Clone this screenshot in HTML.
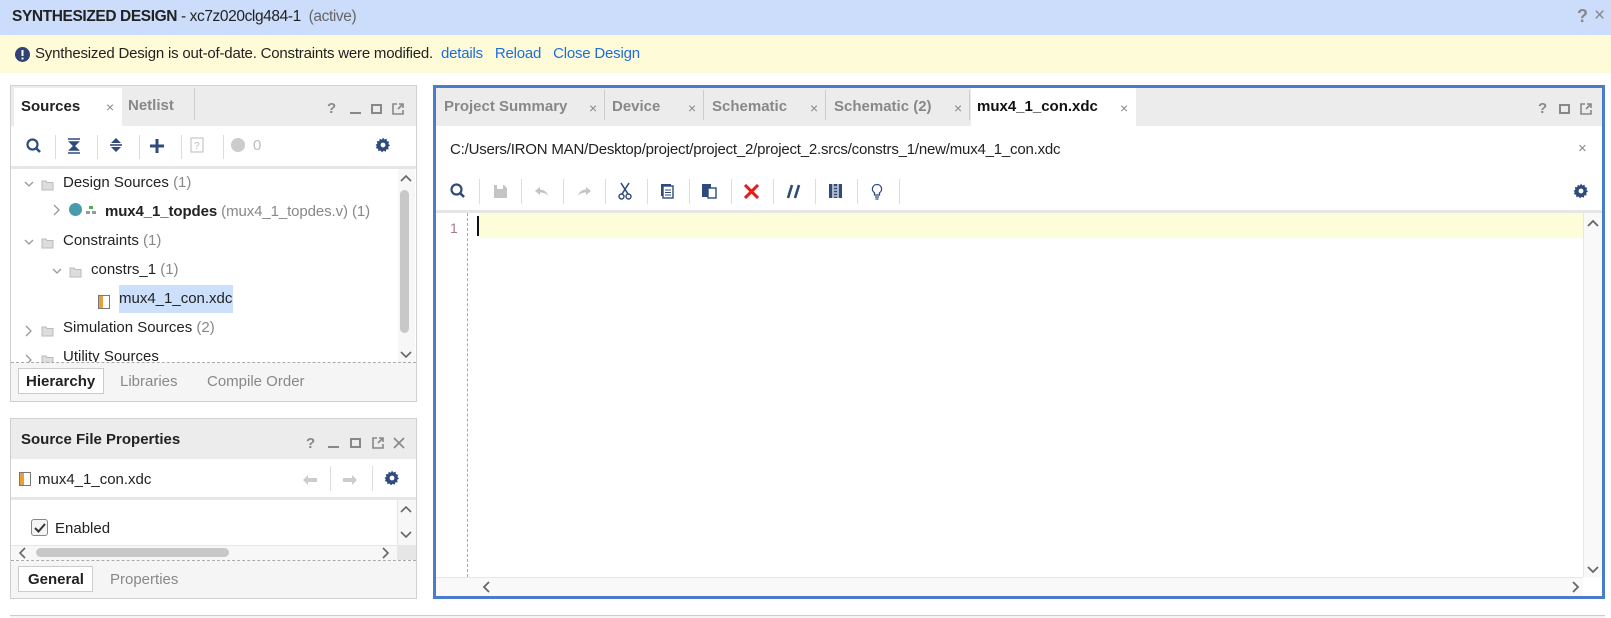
<!DOCTYPE html>
<html><head><meta charset="utf-8"><style>
*{box-sizing:border-box;margin:0;padding:0}
body{width:1611px;height:618px;overflow:hidden;background:#fff;font-family:"Liberation Sans",Arial,sans-serif;font-size:15px;color:#222;position:relative}
.a{position:absolute;white-space:nowrap}
.g{color:#888}
.ic{position:absolute}
.sep{position:absolute;width:1px;background:#ddd}
</style></head><body>
<!-- header -->
<div class="a" style="left:0;top:0;width:1611px;height:35px;background:#cbddfb"></div>
<div class="a" style="left:12px;top:8px;font-size:15.5px;letter-spacing:-0.4px"><b>SYNTHESIZED DESIGN</b> - xc7z020clg484-1 &nbsp;<span style="color:#666">(active)</span></div>
<div class="a" style="left:1577px;top:6px;font-size:18px;font-weight:bold;color:#888">?</div>
<div class="a" style="left:1594px;top:5px;font-size:19px;color:#888">×</div>
<div class="a" style="left:0;top:35px;width:1611px;height:38px;background:#fefcd8"></div>
<svg class="ic" style="left:15px;top:47px" width="15" height="15"><circle cx="7.5" cy="7.5" r="7.5" fill="#2f4475"/><rect x="6.5" y="3" width="2" height="6" fill="#fff"/><rect x="6.5" y="10.5" width="2" height="2" fill="#fff"/></svg>
<div class="a" style="left:35px;top:45px;font-size:15px;letter-spacing:-0.2px">Synthesized Design is out-of-date. Constraints were modified. &nbsp;<span style="color:#1f6ce0">details</span> &nbsp;&nbsp;<span style="color:#1f6ce0">Reload</span> &nbsp;&nbsp;<span style="color:#1f6ce0">Close Design</span></div>

<!-- left panel 1 -->
<div class="a" style="left:10px;top:85px;width:407px;height:317px;border:1px solid #d0d0d0;background:#fff"></div>
<div class="a" style="left:11px;top:86px;width:405px;height:40px;background:#ececec"></div>
<div class="a" style="left:14px;top:88px;width:108px;height:38px;background:#fff"></div>
<div class="a" style="left:21px;top:98px;font-weight:bold">Sources</div>
<div class="a g" style="left:106px;top:99px;font-size:14px">×</div>
<div class="a" style="left:128px;top:97px;font-weight:bold;color:#888">Netlist</div>
<div class="sep" style="left:194px;top:88px;height:32px;background:#ccc"></div>
<div class="a" style="left:327px;top:100px;font-weight:bold;color:#888">?</div>
<div class="a" style="left:350px;top:112px;width:11px;height:2px;background:#888"></div>
<div class="a" style="left:371px;top:104px;width:11px;height:10px;border:2px solid #888"></div>
<svg class="ic" style="left:392px;top:103px" width="12" height="12"><path d="M5 1H1V11H11V7M7 1H11V5M11 1L6 6" stroke="#888" stroke-width="1.6" fill="none"/></svg>
<!-- toolbar -->
<svg class="ic" style="left:26px;top:138px" width="16" height="16"><circle cx="6.5" cy="6.5" r="5" stroke="#2f4b7c" stroke-width="2.2" fill="none"/><path d="M10 10L14 14" stroke="#2f4b7c" stroke-width="2.6"/></svg>
<div class="sep" style="left:55px;top:135px;height:24px"></div>
<svg class="ic" style="left:67px;top:138px" width="14" height="16"><path d="M1 1H13M1 15H13M3 4L7 8L11 4ZM3 12L7 8L11 12Z" stroke="#2f4b7c" stroke-width="1.6" fill="#2f4b7c"/></svg>
<div class="sep" style="left:97px;top:135px;height:24px"></div>
<svg class="ic" style="left:109px;top:137px" width="14" height="16"><path d="M7 1L12 6H2ZM7 15L12 10H2Z" fill="#2f4b7c"/><path d="M1 8H13" stroke="#2f4b7c" stroke-width="1.6"/></svg>
<div class="sep" style="left:139px;top:135px;height:24px"></div>
<svg class="ic" style="left:149px;top:138px" width="16" height="16"><path d="M8 1V15M1 8H15" stroke="#2f4b7c" stroke-width="3"/></svg>
<div class="sep" style="left:181px;top:135px;height:24px"></div>
<svg class="ic" style="left:190px;top:137px" width="14" height="16"><rect x="1" y="1" width="12" height="14" fill="none" stroke="#bbb"/><text x="4" y="12" font-size="10" fill="#bbb" font-family="Liberation Sans">?</text></svg>
<div class="sep" style="left:223px;top:135px;height:24px"></div>
<div class="a" style="left:231px;top:138px;width:14px;height:14px;border-radius:50%;background:#ccc"></div>
<div class="a" style="left:253px;top:137px;color:#bbb">0</div>
<svg class="ic" style="left:375px;top:137px" width="16" height="16" viewBox="0 0 16 16"><path d="M8 0.5l1.3 2 2.3-.7.3 2.3 2.3.6-.8 2.2 1.6 1.6-1.9 1.4.6 2.3-2.4.2-.6 2.3-2.1-1-1.6 1.7-1.4-1.9-2.3.6-.2-2.4-2.3-.6 1-2.1L.5 8l1.9-1.4-.6-2.3 2.4-.2.6-2.3 2.1 1z" fill="#2f4b7c"/><circle cx="8" cy="8" r="2.4" fill="#fff"/></svg>
<div class="a" style="left:11px;top:166px;width:405px;height:3px;background:#e6e6e6"></div>
<!-- tree -->
<svg class="ic" style="left:24px;top:181px" width="10" height="8"><path d="M1 1L5 5L9 1" stroke="#999" stroke-width="1.3" fill="none"/></svg>
<svg class="ic" style="left:41px;top:179px" width="14" height="12"><path d="M1 2H5L6 3.5H12V11H1Z" fill="#ddd" stroke="#bbb"/></svg>
<div class="a" style="left:63px;top:174px">Design Sources <span class="g">(1)</span></div>
<svg class="ic" style="left:53px;top:204px" width="8" height="12"><path d="M1 1L6 6L1 11" stroke="#999" stroke-width="1.3" fill="none"/></svg>
<div class="a" style="left:69px;top:203px;width:13px;height:13px;border-radius:50%;background:#4a9aae"></div>
<svg class="ic" style="left:86px;top:205px" width="10" height="10"><rect x="3" y="1" width="4" height="3" fill="#4caf50"/><rect x="0" y="6" width="4" height="3" fill="#999"/><rect x="6" y="6" width="4" height="3" fill="#999"/></svg>
<div class="a" style="left:105px;top:203px;letter-spacing:-0.1px"><b>mux4_1_topdes</b> <span class="g">(mux4_1_topdes.v) (1)</span></div>
<svg class="ic" style="left:24px;top:239px" width="10" height="8"><path d="M1 1L5 5L9 1" stroke="#999" stroke-width="1.3" fill="none"/></svg>
<svg class="ic" style="left:41px;top:237px" width="14" height="12"><path d="M1 2H5L6 3.5H12V11H1Z" fill="#ddd" stroke="#bbb"/></svg>
<div class="a" style="left:63px;top:232px">Constraints <span class="g">(1)</span></div>
<svg class="ic" style="left:52px;top:268px" width="10" height="8"><path d="M1 1L5 5L9 1" stroke="#999" stroke-width="1.3" fill="none"/></svg>
<svg class="ic" style="left:69px;top:266px" width="14" height="12"><path d="M1 2H5L6 3.5H12V11H1Z" fill="#ddd" stroke="#bbb"/></svg>
<div class="a" style="left:91px;top:261px">constrs_1 <span class="g">(1)</span></div>
<svg class="ic" style="left:98px;top:295px" width="12" height="14"><rect x="0.5" y="0.5" width="11" height="13" fill="#fff" stroke="#777"/><rect x="1" y="1" width="4" height="12" fill="#e8a13a"/></svg>
<div class="a" style="left:119px;top:285px;width:114px;height:28px;background:#cde0fb"></div>
<div class="a" style="left:119px;top:290px">mux4_1_con.xdc</div>
<svg class="ic" style="left:25px;top:325px" width="8" height="12"><path d="M1 1L6 6L1 11" stroke="#999" stroke-width="1.3" fill="none"/></svg>
<svg class="ic" style="left:41px;top:325px" width="14" height="12"><path d="M1 2H5L6 3.5H12V11H1Z" fill="#ddd" stroke="#bbb"/></svg>
<div class="a" style="left:63px;top:319px">Simulation Sources <span class="g">(2)</span></div>
<svg class="ic" style="left:25px;top:354px" width="8" height="9"><path d="M1 1L6 6L1 11" stroke="#999" stroke-width="1.3" fill="none"/></svg>
<svg class="ic" style="left:41px;top:354px" width="14" height="9"><path d="M1 2H5L6 3.5H12V11H1Z" fill="#ddd" stroke="#bbb"/></svg>
<div class="a" style="left:63px;top:348px;height:14px;overflow:hidden">Utility Sources</div>
<!-- v scrollbar -->
<div class="a" style="left:398px;top:169px;width:17px;height:194px;background:#f7f7f7"></div>
<svg class="ic" style="left:400px;top:174px" width="12" height="8"><path d="M1 7L6 2L11 7" stroke="#666" stroke-width="1.6" fill="none"/></svg>
<div class="a" style="left:400px;top:190px;width:9px;height:143px;border-radius:5px;background:#c8c8c8"></div>
<svg class="ic" style="left:400px;top:351px" width="12" height="8"><path d="M1 1L6 6L11 1" stroke="#666" stroke-width="1.6" fill="none"/></svg>
<div class="a" style="left:11px;top:362px;width:405px;height:0;border-top:1px dashed #aaa"></div>
<div class="a" style="left:11px;top:363px;width:405px;height:38px;background:#f5f5f5"></div>
<div class="a" style="left:18px;top:368px;width:86px;height:26px;background:#fff;border:1px solid #ccc"></div>
<div class="a" style="left:26px;top:373px;font-weight:bold">Hierarchy</div>
<div class="a g" style="left:120px;top:373px">Libraries</div>
<div class="a g" style="left:207px;top:373px">Compile Order</div>

<!-- left panel 2 -->
<div class="a" style="left:10px;top:418px;width:407px;height:181px;border:1px solid #d0d0d0;background:#fff"></div>
<div class="a" style="left:11px;top:419px;width:405px;height:40px;background:#ececec"></div>
<div class="a" style="left:21px;top:431px;font-weight:bold">Source File Properties</div>
<div class="a" style="left:306px;top:435px;font-weight:bold;color:#888">?</div>
<div class="a" style="left:328px;top:446px;width:11px;height:2px;background:#888"></div>
<div class="a" style="left:350px;top:438px;width:11px;height:10px;border:2px solid #888"></div>
<svg class="ic" style="left:372px;top:437px" width="12" height="12"><path d="M5 1H1V11H11V7M7 1H11V5M11 1L6 6" stroke="#888" stroke-width="1.6" fill="none"/></svg>
<svg class="ic" style="left:393px;top:437px" width="12" height="12"><path d="M1 1L11 11M11 1L1 11" stroke="#888" stroke-width="1.6"/></svg>
<svg class="ic" style="left:19px;top:472px" width="12" height="14"><rect x="0.5" y="0.5" width="11" height="13" fill="#fff" stroke="#777"/><rect x="1" y="1" width="4" height="12" fill="#e8a13a"/></svg>
<div class="a" style="left:38px;top:471px">mux4_1_con.xdc</div>
<svg class="ic" style="left:302px;top:474px" width="16" height="12"><path d="M6 1L1 6L6 11Z" fill="#ccc"/><rect x="5" y="4" width="10" height="4" fill="#ccc"/></svg>
<div class="sep" style="left:330px;top:466px;height:25px"></div>
<svg class="ic" style="left:342px;top:474px" width="16" height="12"><path d="M10 1L15 6L10 11Z" fill="#ccc"/><rect x="1" y="4" width="10" height="4" fill="#ccc"/></svg>
<div class="sep" style="left:372px;top:466px;height:25px"></div>
<svg class="ic" style="left:384px;top:470px" width="16" height="16" viewBox="0 0 16 16"><path d="M8 0.5l1.3 2 2.3-.7.3 2.3 2.3.6-.8 2.2 1.6 1.6-1.9 1.4.6 2.3-2.4.2-.6 2.3-2.1-1-1.6 1.7-1.4-1.9-2.3.6-.2-2.4-2.3-.6 1-2.1L.5 8l1.9-1.4-.6-2.3 2.4-.2.6-2.3 2.1 1z" fill="#2f4b7c"/><circle cx="8" cy="8" r="2.4" fill="#fff"/></svg>
<div class="a" style="left:11px;top:497px;width:405px;height:3px;background:#e6e6e6"></div>
<div class="a" style="left:31px;top:519px;width:17px;height:17px;border:1px solid #888;border-radius:3px;background:#f4f4f4"></div>
<svg class="ic" style="left:34px;top:522px" width="12" height="11"><path d="M1 6L4.5 9.5L11 2" stroke="#333" stroke-width="2" fill="none"/></svg>
<div class="a" style="left:55px;top:520px">Enabled</div>
<div class="a" style="left:397px;top:500px;width:19px;height:45px;background:#f7f7f7;border-left:1px solid #e6e6e6"></div>
<svg class="ic" style="left:400px;top:505px" width="12" height="8"><path d="M1 7L6 2L11 7" stroke="#666" stroke-width="1.6" fill="none"/></svg>
<svg class="ic" style="left:400px;top:531px" width="12" height="8"><path d="M1 1L6 6L11 1" stroke="#666" stroke-width="1.6" fill="none"/></svg>
<div class="a" style="left:11px;top:545px;width:386px;height:15px;background:#f7f7f7;border-top:1px solid #e6e6e6"></div>
<svg class="ic" style="left:18px;top:547px" width="8" height="12"><path d="M7 1L2 6L7 11" stroke="#666" stroke-width="1.6" fill="none"/></svg>
<div class="a" style="left:36px;top:548px;width:193px;height:9px;border-radius:5px;background:#c8c8c8"></div>
<svg class="ic" style="left:382px;top:547px" width="8" height="12"><path d="M1 1L6 6L1 11" stroke="#666" stroke-width="1.6" fill="none"/></svg>
<div class="a" style="left:397px;top:545px;width:19px;height:15px;background:#e6e6e6"></div>
<div class="a" style="left:11px;top:560px;width:405px;height:0;border-top:1px dashed #aaa"></div>
<div class="a" style="left:11px;top:561px;width:405px;height:37px;background:#f5f5f5"></div>
<div class="a" style="left:18px;top:566px;width:75px;height:26px;background:#fff;border:1px solid #ccc"></div>
<div class="a" style="left:28px;top:571px;font-weight:bold">General</div>
<div class="a g" style="left:110px;top:571px">Properties</div>

<!-- editor -->
<div class="a" style="left:433px;top:85px;width:1172px;height:514px;border:3px solid #4a7ccb;background:#fff"></div>
<div class="a" style="left:436px;top:88px;width:1166px;height:38px;background:#ececec"></div>
<div class="a" style="left:444px;top:98px;font-weight:bold;color:#888">Project Summary</div>
<div class="a g" style="left:589px;top:100px;font-size:14px">×</div>
<div class="sep" style="left:604px;top:90px;height:30px;background:#ccc"></div>
<div class="a" style="left:612px;top:98px;font-weight:bold;color:#888">Device</div>
<div class="a g" style="left:688px;top:100px;font-size:14px">×</div>
<div class="sep" style="left:703px;top:90px;height:30px;background:#ccc"></div>
<div class="a" style="left:712px;top:98px;font-weight:bold;color:#888">Schematic</div>
<div class="a g" style="left:810px;top:100px;font-size:14px">×</div>
<div class="sep" style="left:825px;top:90px;height:30px;background:#ccc"></div>
<div class="a" style="left:834px;top:98px;font-weight:bold;color:#888">Schematic (2)</div>
<div class="a g" style="left:954px;top:100px;font-size:14px">×</div>
<div class="sep" style="left:969px;top:90px;height:30px;background:#ccc"></div>
<div class="a" style="left:971px;top:88px;width:165px;height:38px;background:#fff"></div>
<div class="a" style="left:977px;top:98px;font-weight:bold;color:#111">mux4_1_con.xdc</div>
<div class="a g" style="left:1120px;top:100px;font-size:14px">×</div>
<div class="a" style="left:1538px;top:100px;font-weight:bold;color:#888">?</div>
<div class="a" style="left:1559px;top:104px;width:11px;height:10px;border:2px solid #888"></div>
<svg class="ic" style="left:1580px;top:103px" width="12" height="12"><path d="M5 1H1V11H11V7M7 1H11V5M11 1L6 6" stroke="#888" stroke-width="1.6" fill="none"/></svg>
<div class="a" style="left:450px;top:141px;font-size:15px;letter-spacing:-0.2px">C:/Users/IRON MAN/Desktop/project/project_2/project_2.srcs/constrs_1/new/mux4_1_con.xdc</div>
<div class="a g" style="left:1578px;top:140px;font-size:15px">×</div>
<!-- editor toolbar -->
<svg class="ic" style="left:450px;top:183px" width="16" height="16"><circle cx="6.5" cy="6.5" r="5" stroke="#2f4b7c" stroke-width="2.2" fill="none"/><path d="M10 10L14 14" stroke="#2f4b7c" stroke-width="2.6"/></svg>
<div class="sep" style="left:479px;top:179px;height:25px"></div>
<svg class="ic" style="left:493px;top:184px" width="15" height="15"><path d="M1 1H11L14 4V14H1Z" fill="#c4c4c4"/><rect x="4" y="1" width="6" height="4" fill="#fff"/></svg>
<div class="sep" style="left:521px;top:179px;height:25px"></div>
<svg class="ic" style="left:534px;top:186px" width="16" height="12"><path d="M6 1L1 5L6 9V6.5C10 6.5 12 7.5 14 10C13 6 10 3.5 6 3.5Z" fill="#c4c4c4"/></svg>
<div class="sep" style="left:563px;top:179px;height:25px"></div>
<svg class="ic" style="left:576px;top:186px" width="16" height="12"><path d="M10 1L15 5L10 9V6.5C6 6.5 4 7.5 2 10C3 6 6 3.5 10 3.5Z" fill="#c4c4c4"/></svg>
<div class="sep" style="left:605px;top:179px;height:25px"></div>
<svg class="ic" style="left:618px;top:182px" width="14" height="18"><path d="M3 1L10 12M11 1L4 12" stroke="#2f4b7c" stroke-width="1.6"/><circle cx="3.5" cy="14.5" r="2.5" fill="none" stroke="#2f4b7c" stroke-width="1.4"/><circle cx="10.5" cy="14.5" r="2.5" fill="none" stroke="#2f4b7c" stroke-width="1.4"/></svg>
<div class="sep" style="left:647px;top:179px;height:25px"></div>
<svg class="ic" style="left:660px;top:183px" width="14" height="16"><rect x="1" y="1" width="10" height="12" fill="#2f4b7c"/><rect x="3" y="3" width="10" height="12" fill="#fff" stroke="#2f4b7c" stroke-width="1.4"/><path d="M5 7H11M5 9.5H11M5 12H11" stroke="#2f4b7c"/></svg>
<div class="sep" style="left:689px;top:179px;height:25px"></div>
<svg class="ic" style="left:701px;top:183px" width="16" height="16"><rect x="1" y="1" width="9" height="13" fill="#2f4b7c"/><rect x="7" y="5" width="8" height="10" fill="#fff" stroke="#2f4b7c" stroke-width="1.4"/></svg>
<div class="sep" style="left:731px;top:179px;height:25px"></div>
<svg class="ic" style="left:744px;top:184px" width="15" height="15"><path d="M1 1L14 14M14 1L1 14" stroke="#e51c1c" stroke-width="3"/></svg>
<div class="sep" style="left:773px;top:179px;height:25px"></div>
<svg class="ic" style="left:786px;top:184px" width="16" height="15"><path d="M6 1L2 14M13 1L9 14" stroke="#2f4b7c" stroke-width="2.6"/></svg>
<div class="sep" style="left:815px;top:179px;height:25px"></div>
<svg class="ic" style="left:828px;top:183px" width="15" height="16"><rect x="1" y="1" width="13" height="14" fill="#2f4b7c"/><path d="M5 1V15M10 1V15" stroke="#fff" stroke-width="1.2"/><path d="M6 4H9M6 7H9M6 10H9M6 13H9" stroke="#fff"/></svg>
<div class="sep" style="left:857px;top:179px;height:25px"></div>
<svg class="ic" style="left:871px;top:183px" width="12" height="17"><path d="M6 1.5A4.5 4.5 0 0 0 3.5 9.8V12H8.5V9.8A4.5 4.5 0 0 0 6 1.5Z" fill="none" stroke="#2f4b7c" stroke-width="1.3"/><path d="M4 14H8M4.5 16H7.5" stroke="#2f4b7c" stroke-width="1.2"/></svg>
<div class="sep" style="left:899px;top:179px;height:25px"></div>
<svg class="ic" style="left:1573px;top:183px" width="16" height="16" viewBox="0 0 16 16"><path d="M8 0.5l1.3 2 2.3-.7.3 2.3 2.3.6-.8 2.2 1.6 1.6-1.9 1.4.6 2.3-2.4.2-.6 2.3-2.1-1-1.6 1.7-1.4-1.9-2.3.6-.2-2.4-2.3-.6 1-2.1L.5 8l1.9-1.4-.6-2.3 2.4-.2.6-2.3 2.1 1z" fill="#2f4b7c"/><circle cx="8" cy="8" r="2.4" fill="#fff"/></svg>
<div class="a" style="left:436px;top:210px;width:1166px;height:3px;background:#e6e6e6"></div>
<!-- editing area -->
<div class="a" style="left:478px;top:213px;width:1106px;height:25px;background:#fefdd9"></div>
<div class="a" style="left:450px;top:220px;color:#a87a84;font-size:14px">1</div>
<div class="a" style="left:467px;top:213px;height:364px;border-left:1px dashed #aaa"></div>
<div class="a" style="left:477px;top:216px;width:2px;height:20px;background:#111"></div>
<div class="a" style="left:1583px;top:213px;width:19px;height:364px;background:#f9f9f9;border-left:1px solid #e6e6e6"></div>
<svg class="ic" style="left:1587px;top:219px" width="12" height="8"><path d="M1 7L6 2L11 7" stroke="#666" stroke-width="1.8" fill="none"/></svg>
<svg class="ic" style="left:1587px;top:566px" width="12" height="8"><path d="M1 1L6 6L11 1" stroke="#666" stroke-width="1.8" fill="none"/></svg>
<div class="a" style="left:436px;top:577px;width:1147px;height:19px;background:#f9f9f9;border-top:1px solid #e6e6e6"></div>
<svg class="ic" style="left:482px;top:581px" width="8" height="12"><path d="M7 1L2 6L7 11" stroke="#666" stroke-width="1.8" fill="none"/></svg>
<svg class="ic" style="left:1572px;top:581px" width="8" height="12"><path d="M1 1L6 6L1 11" stroke="#666" stroke-width="1.8" fill="none"/></svg>
<!-- bottom -->
<div class="a" style="left:10px;top:615px;width:1595px;height:3px;border-top:1px solid #ccc;background:#f5f5f5"></div>
</body></html>
